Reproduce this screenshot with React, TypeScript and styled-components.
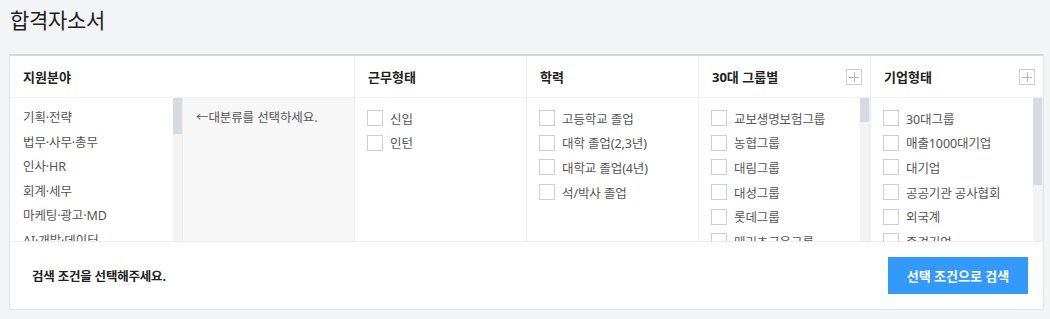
import styled, { createGlobalStyle } from 'styled-components';

const GlobalStyle = createGlobalStyle`
  body {
    margin: 0;
    background: #f3f4f6;
    font-family: 'Noto Sans', 'Noto Sans CJK KR', sans-serif;
    color: #222;
  }
`;

const Page = styled.div`
  width: 1050px;
  height: 319px;
  overflow: hidden;
`;

const PageTitle = styled.h1`
  margin: 0 0 14px 10px;
  height: 40px;
  line-height: 40px;
  font-size: 21px;
  font-weight: 400;
  letter-spacing: -0.3px;
  color: #1e1e1e;
`;

const Card = styled.section`
  margin: 0 6px 0 9px;
  background: #fff;
  border: 1px solid #e4e4e4;
  border-top: 2px solid #d8d8d8;
`;

const Grid = styled.div`
  display: grid;
  grid-template-columns: 345px 172px 172px 172px 1fr;
`;

const Column = styled.div<{ $last?: boolean }>`
  display: flex;
  flex-direction: column;
  border-right: ${(p) => (p.$last ? 'none' : '1px solid #ececec')};
  min-width: 0;
`;

const ColHead = styled.div`
  height: 41px;
  display: flex;
  align-items: center;
  justify-content: space-between;
  padding: 0 8px 0 13px;
  border-bottom: 1px solid #f1f1f1;
  font-size: 13px;
  font-weight: 700;
  color: #222;
`;

const PlusBox = styled.span`
  position: relative;
  width: 16px;
  height: 16px;
  border: 1px solid #d0d0d0;
  box-sizing: border-box;
  &::before,
  &::after {
    content: '';
    position: absolute;
    background: #b5b5b5;
  }
  &::before {
    left: 2px;
    right: 2px;
    top: 7px;
    height: 1px;
  }
  &::after {
    top: 2px;
    bottom: 2px;
    left: 7px;
    width: 1px;
  }
`;

const ColBody = styled.div`
  height: 143px;
  display: flex;
  min-height: 0;
`;

const ListPane = styled.div<{ $width?: string }>`
  display: flex;
  width: ${(p) => p.$width || '100%'};
  flex: none;
  height: 143px;
`;

const Scroll = styled.ul`
  list-style: none;
  margin: 0;
  padding: 8px 0 0;
  flex: 1;
  min-width: 0;
  overflow: hidden;
`;

const Track = styled.div`
  width: 9px;
  flex: none;
  background: #f3f3f4;
  border-right: 1px solid #ededed;
`;

const Thumb = styled.div<{ $size: number }>`
  height: ${(p) => p.$size}px;
  background: #d6dae2;
`;

const Category = styled.li`
  height: 24.6px;
  line-height: 24.6px;
  padding-left: 13px;
  font-size: 12.5px;
  letter-spacing: -0.1px;
  color: #555;
  white-space: nowrap;
`;

const SubPanel = styled.div`
  flex: 1;
  background: #f7f7f8;
  padding: 10px 0 0 13px;
  font-size: 12.5px;
  letter-spacing: -0.1px;
  line-height: 20px;
  color: #555;
`;

const CheckRow = styled.li`
  height: 24.6px;
  display: flex;
  align-items: center;
  gap: 7px;
  padding-left: 12px;
  font-size: 12.5px;
  letter-spacing: -0.1px;
  color: #555;
  white-space: nowrap;
`;

const Box = styled.span`
  width: 16px;
  height: 16px;
  flex: none;
  box-sizing: border-box;
  border: 1px solid #cfcfcf;
  background: #fff;
`;

const Footer = styled.div`
  height: 67px;
  border-top: 1px solid #ececec;
  display: flex;
  align-items: center;
  justify-content: space-between;
  padding: 0 15px 0 22px;
`;

const Notice = styled.p`
  margin: 0;
  font-size: 12.5px;
  letter-spacing: -0.2px;
  font-weight: 700;
  color: #222;
`;

const SearchButton = styled.button`
  width: 140px;
  height: 37px;
  border: none;
  background: #3399fb;
  color: #fff;
  font-family: inherit;
  font-size: 13px;
  font-weight: 700;
  cursor: pointer;
`;

const categories = [
  '기획·전략', '법무·사무·총무', '인사·HR', '회계·세무', '마케팅·광고·MD',
  'AI·개발·데이터', '디자인', '물류·무역', '운전·운송·배송', '영업',
  '고객상담·TM', '금융·보험', '식·음료', '고객서비스·리테일', '엔지니어링·설계',
  '제조·생산', '교육', '건축·시설', '의료·바이오', '미디어·문화·스포츠', '공공·복지',
];

const workTypes = ['신입', '인턴'];
const education = ['고등학교 졸업', '대학 졸업(2,3년)', '대학교 졸업(4년)', '석/박사 졸업'];
const groups = [
  '교보생명보험그룹', '농협그룹', '대림그룹', '대성그룹', '롯데그룹', '메리츠금융그룹',
  '미래에셋그룹', '부영그룹', '삼성그룹', '세아그룹', '신세계그룹', '아모레퍼시픽그룹',
  '에쓰오일', '영풍그룹', '오씨아이그룹', '이랜드그룹', '중흥건설그룹', '카카오그룹',
  'KCC그룹', 'KT그룹', 'KT&G그룹', 'LG그룹', 'LS그룹', 'SK그룹', 'GS그룹',
  'CJ그룹', 'HDC그룹', '포스코그룹', '한국투자금융그룹', '한진그룹', '한화그룹',
  '현대자동차그룹', '현대중공업그룹', '효성그룹',
];
const companyTypes = [
  '30대그룹', '매출1000대기업', '대기업', '공공기관 공사협회', '외국계',
  '중견기업', '코스피', '코스닥', '벤처기업',
];

function Scrollbar({ thumb }: { thumb: number }) {
  return (
    <Track>
      <Thumb $size={thumb} />
    </Track>
  );
}

function CheckList({ items, thumb }: { items: string[]; thumb?: number }) {
  return (
    <ListPane>
      <Scroll>
        {items.map((item) => (
          <CheckRow key={item}>
            <Box />
            {item}
          </CheckRow>
        ))}
      </Scroll>
      {thumb !== undefined && <Scrollbar thumb={thumb} />}
    </ListPane>
  );
}

export default function App() {
  return (
    <Page>
      <GlobalStyle />
      <PageTitle>합격자소서</PageTitle>
      <Card>
        <Grid>
          <Column>
            <ColHead>지원분야</ColHead>
            <ColBody>
              <ListPane $width="173px">
                <Scroll>
                  {categories.map((c) => (
                    <Category key={c}>{c}</Category>
                  ))}
                </Scroll>
                <Scrollbar thumb={36} />
              </ListPane>
              <SubPanel>←대분류를 선택하세요.</SubPanel>
            </ColBody>
          </Column>
          <Column>
            <ColHead>근무형태</ColHead>
            <ColBody>
              <CheckList items={workTypes} />
            </ColBody>
          </Column>
          <Column>
            <ColHead>학력</ColHead>
            <ColBody>
              <CheckList items={education} />
            </ColBody>
          </Column>
          <Column>
            <ColHead>
              30대 그룹별
              <PlusBox />
            </ColHead>
            <ColBody>
              <CheckList items={groups} thumb={24} />
            </ColBody>
          </Column>
          <Column $last>
            <ColHead>
              기업형태
              <PlusBox />
            </ColHead>
            <ColBody>
              <CheckList items={companyTypes} thumb={87} />
            </ColBody>
          </Column>
        </Grid>
        <Footer>
          <Notice>검색 조건을 선택해주세요.</Notice>
          <SearchButton>선택 조건으로 검색</SearchButton>
        </Footer>
      </Card>
    </Page>
  );
}
